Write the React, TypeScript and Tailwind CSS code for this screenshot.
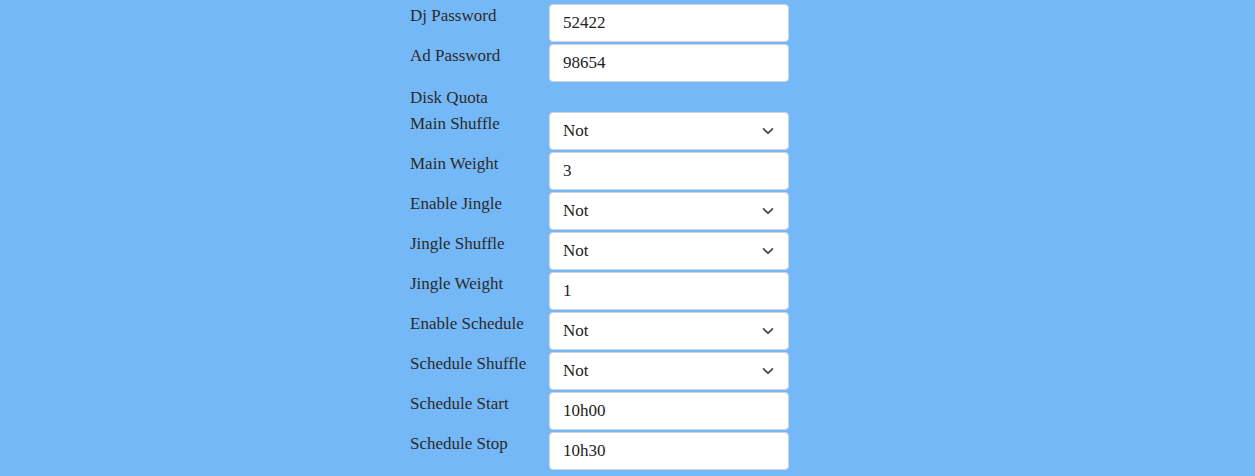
import React from 'react'

type Field =
  | { label: string; kind: 'text'; value: string }
  | { label: string; kind: 'select'; value: string }
  | { label: string; kind: 'none' }

const fields: Field[] = [
  { label: 'Dj Password', kind: 'text', value: '52422' },
  { label: 'Ad Password', kind: 'text', value: '98654' },
  { label: 'Disk Quota', kind: 'none' },
  { label: 'Main Shuffle', kind: 'select', value: 'Not' },
  { label: 'Main Weight', kind: 'text', value: '3' },
  { label: 'Enable Jingle', kind: 'select', value: 'Not' },
  { label: 'Jingle Shuffle', kind: 'select', value: 'Not' },
  { label: 'Jingle Weight', kind: 'text', value: '1' },
  { label: 'Enable Schedule', kind: 'select', value: 'Not' },
  { label: 'Schedule Shuffle', kind: 'select', value: 'Not' },
  { label: 'Schedule Start', kind: 'text', value: '10h00' },
  { label: 'Schedule Stop', kind: 'text', value: '10h30' },
]

const boxClass =
  'h-[38px] w-[240px] rounded-[4px] border border-[#cfd4da] bg-white pl-[13px] pr-3 text-[17px] text-[#222] outline-none'

function Chevron() {
  return (
    <svg
      className="pointer-events-none absolute right-[15px] top-1/2 -translate-y-1/2"
      width="12"
      height="8"
      viewBox="0 0 12 8"
      fill="none"
    >
      <path d="M1.5 1.8 6 6.2l4.5-4.4" stroke="#444" strokeWidth="1.7" strokeLinecap="round" strokeLinejoin="round" />
    </svg>
  )
}

export default function App() {
  return (
    <div
      className="min-h-screen w-full bg-[#75b8f7] text-[#333]"
      style={{ fontFamily: '"Liberation Serif", "DejaVu Serif", serif' }}
    >
      <form className="mx-auto w-[465px] px-[15px] pt-[2px]">
        {fields.map((f) => (
          <div key={f.label} className="my-[2px] flex items-start">
            <label
              className={
                'w-[139px] shrink-0 text-[17px] leading-6 text-[#2b2b2b]' +
                (f.kind === 'none' ? ' pt-[2px]' : '')
              }
            >
              {f.label}
            </label>
            {f.kind === 'text' && (
              <input className={boxClass} defaultValue={f.value} readOnly />
            )}
            {f.kind === 'select' && (
              <div className="relative">
                <select className={boxClass + ' appearance-none'} defaultValue={f.value}>
                  <option value="Not">Not</option>
                  <option value="Yes">Yes</option>
                </select>
                <Chevron />
              </div>
            )}
          </div>
        ))}
      </form>
    </div>
  )
}
